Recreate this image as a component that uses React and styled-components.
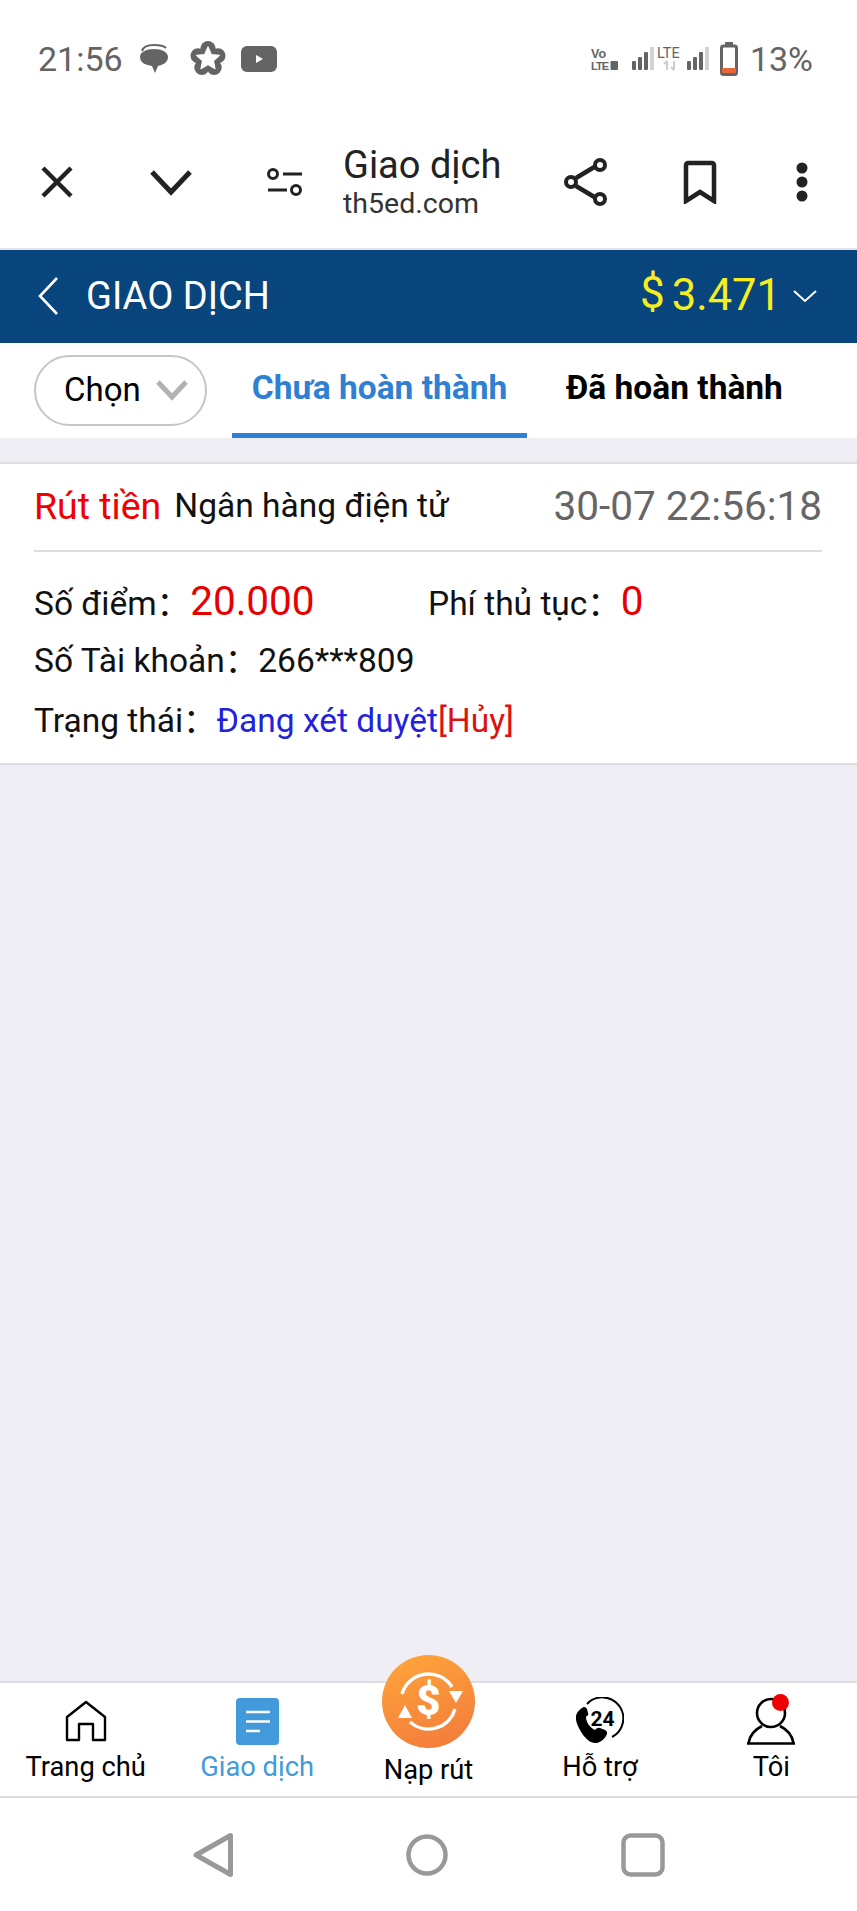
import React from 'react';
import styled, { createGlobalStyle } from 'styled-components';

const GlobalStyle = createGlobalStyle`
  html, body {
    margin: 0;
    padding: 0;
    background: #fff;
    font-family: Roboto, "Noto Sans CJK SC", sans-serif;
  }
  * { box-sizing: border-box; }
`;

const Page = styled.div`
  display: flex;
  flex-direction: column;
  width: 857px;
  height: 1911px;
  background: #eeeef4;
  overflow: hidden;
`;

/* android status bar */
const StatusBar = styled.div`
  display: flex;
  align-items: center;
  justify-content: space-between;
  flex: none;
  height: 118px;
  padding: 0 44px 0 38px;
  background: #fff;
  color: #646464;
`;
const StatusGroup = styled.div`
  display: flex;
  align-items: center;
  gap: ${p => p.$gap || 14}px;
  margin: ${p => p.$margin || 0};
`;
const StatusText = styled.span`
  font-size: 34px;
  line-height: 38px;
  margin: ${p => p.$margin || 0};
`;

/* browser toolbar */
const Toolbar = styled.div`
  display: flex;
  align-items: center;
  flex: none;
  height: 132px;
  padding: 0 10px 2px 0;
  background: #fff;
  border-bottom: 2px solid #e3e6e8;
`;
const ToolSlot = styled.div`
  display: flex;
  align-items: center;
  justify-content: center;
  flex: none;
  width: ${p => p.$w || 114}px;
`;
const TitleBlock = styled.div`
  flex: 1;
  padding-left: 1px;
  color: #222;
`;
const PageTitle = styled.div`
  font-size: 38px;
  line-height: 44px;
`;
const PageHost = styled.div`
  font-size: 28.500px;
  line-height: 34px;
  color: #333;
`;

/* site header */
const Header = styled.div`
  display: flex;
  align-items: center;
  flex: none;
  height: 93px;
  padding: 0 39px 2px 37px;
  background: #08457c;
  color: #fff;
`;
const HeaderTitle = styled.div`
  flex: 1;
  margin-left: 27px;
  font-size: 38px;
`;
const Dollar = styled.span`
  color: #f6ee1f;
  font-size: 44px;
  line-height: 50px;
  margin-top: -6px;
`;
const Balance = styled.span`
  margin: 0 11px 0 7px;
  color: #f6ee1f;
  font-size: 43.500px;
  line-height: 50px;
`;

/* filter + tabs */
const TabBar = styled.div`
  display: flex;
  align-items: stretch;
  flex: none;
  height: 95px;
  background: #fff;
`;
const PillWrap = styled.div`
  display: flex;
  align-items: flex-start;
  flex: none;
  width: 232px;
  padding: 12px 0 0 34px;
`;
const Pill = styled.div`
  display: flex;
  align-items: center;
  justify-content: space-between;
  width: 173px;
  height: 71px;
  padding: 0 16px 2px 28px;
  border: 2px solid #c6c6c6;
  border-radius: 36px;
  font-size: 33px;
  color: #000;
`;
const Tab = styled.div`
  display: flex;
  align-items: center;
  justify-content: center;
  flex: none;
  width: 295px;
  padding-bottom: 1px;
  font-size: 33.500px;
  font-weight: 700;
  color: ${p => (p.$active ? '#2f7fd3' : '#000')};
  border-bottom: 5px solid ${p => (p.$active ? '#2f7fd3' : 'transparent')};
`;

const Content = styled.div`
  flex: 1;
  padding-top: 24px;
`;
const Card = styled.div`
  height: 303px;
  padding: 0 35px 0 34px;
  background: #fff;
  border-top: 2px solid #dedee0;
  border-bottom: 2px solid #dedee0;
`;
const CardHead = styled.div`
  display: flex;
  align-items: center;
  height: 88px;
  padding-bottom: 3px;
  border-bottom: 2px solid #dedede;
`;
const Kind = styled.span`
  color: #f00000;
  font-size: 37.500px;
`;
const Channel = styled.span`
  flex: 1;
  margin-left: 13px;
  font-size: 33.500px;
  color: #111;
`;
const Time = styled.span`
  font-size: 40.500px;
  color: #666;
`;
const CardBody = styled.div`
  padding-top: 19px;
`;
const Line = styled.div`
  display: flex;
  align-items: baseline;
  height: 60px;
  font-size: 33.500px;
  line-height: 60px;
  color: #111;
`;
const Cell = styled.div`
  display: flex;
  align-items: baseline;
  width: ${p => p.$w || 'auto'};
`;
const Amount = styled.span`
  color: #e60000;
  font-size: 40.500px;
`;
const Pending = styled.span`
  color: #2222dd;
`;
const Cancel = styled.span`
  color: #dd1111;
`;

/* bottom tabs */
const BottomNav = styled.div`
  display: grid;
  grid-template-columns: repeat(5, 1fr);
  flex: none;
  height: 117px;
  background: #fff;
  border-top: 2px solid #dedee0;
  border-bottom: 2px solid #dedee0;
`;
const NavItem = styled.div`
  display: flex;
  flex-direction: column;
  align-items: center;
  padding-top: ${p => p.$top ?? 14}px;
  color: ${p => (p.$active ? '#429ada' : '#000')};
  font-size: 27.300px;
`;
const NavIcon = styled.div`
  position: relative;
  display: flex;
  align-items: center;
  justify-content: center;
  height: 48px;
  margin-bottom: 5px;
`;
const NavLabel = styled.span`
  line-height: 34px;
`;
const CashButton = styled.div`
  display: flex;
  align-items: center;
  justify-content: center;
  width: 93px;
  height: 93px;
  margin: -28px 0 5px;
  border-radius: 50%;
  background: linear-gradient(160deg, #ffa63a, #f2793c);
`;
const RedDot = styled.span`
  position: absolute;
  top: -3px;
  right: 6px;
  width: 17px;
  height: 17px;
  border-radius: 50%;
  background: #f00000;
`;

/* android nav */
const SystemNav = styled.div`
  display: grid;
  grid-template-columns: 214px 42px 1fr;
  align-items: center;
  flex: none;
  height: 113px;
  padding-left: 192px;
  background: #fff;
`;
const SysSlot = styled.div`
  display: flex;
  align-items: center;
  padding-left: ${p => p.$pl || 0}px;
`;

const Chat = () => (
  <svg width="30" height="32" viewBox="0 0 30 32">
    <path d="M3 8C4 4 9 2 15 2s10 1 12 3" fill="none" stroke="#646464" strokeWidth="2" />
    <path d="M1 14c0-5 6-8 14-8s14 3 14 8c0 6-6 8-10 9l-3 7-3-7C7 22 1 20 1 14z" fill="#646464" />
  </svg>
);

const Flower = () => (
  <svg width="36" height="36" viewBox="0 0 36 36">
    <g fill="#646464">
      <circle cx="18" cy="18" r="10" />
      <circle cx="18" cy="7.500" r="7.500" />
      <circle cx="28" cy="14.800" r="7.500" />
      <circle cx="24.200" cy="26.500" r="7.500" />
      <circle cx="11.800" cy="26.500" r="7.500" />
      <circle cx="8" cy="14.800" r="7.500" />
    </g>
    <path
      d="M18 6L21.300 13.500 29.400 14.400 23.400 19.800 25 27.700 18 23.600 11 27.700 12.600 19.800 6.600 14.400 14.700 13.500z"
      fill="#fff"
      stroke="#fff"
      strokeWidth="1.200"
      strokeLinejoin="round"
    />
  </svg>
);

const Youtube = () => (
  <svg width="36" height="26" viewBox="0 0 36 26">
    <rect width="36" height="26" rx="6" fill="#646464" />
    <path d="M15 9l7 4-7 4z" fill="#fff" />
  </svg>
);

const VoLte = () => (
  <svg width="27" height="24" viewBox="0 0 27 24">
    <text x="0" y="11" fontFamily="Liberation Sans" fontSize="12.500" fontWeight="700" fill="#646464">Vo</text>
    <text x="0" y="23" fontFamily="Liberation Sans" fontSize="11" fontWeight="700" fill="#646464" textLength="18">LTE</text>
    <rect x="19.500" y="14" width="7.500" height="9" rx="1" fill="#646464" />
  </svg>
);

const Signal = () => (
  <svg width="22" height="24" viewBox="0 0 22 24">
    <rect x="0" y="14" width="4" height="9" rx="1" fill="#646464" />
    <rect x="6" y="10" width="4" height="13" rx="1" fill="#646464" />
    <rect x="12" y="5" width="4" height="18" rx="1" fill="#646464" />
    <rect x="18" y="0" width="4" height="23" fill="#d2d2d2" />
  </svg>
);

const Lte = () => (
  <svg width="31" height="26" viewBox="0 0 31 26">
    <text x="2" y="12" fontFamily="Roboto" fontSize="14.500" fill="#646464">LTE</text>
    <path d="M12 15v9M9 18l3-3M19 15v9M16 21l3 3" stroke="#cccccc" strokeWidth="2" fill="none" />
  </svg>
);

const Battery = () => (
  <svg width="18" height="34" viewBox="0 0 18 34">
    <rect x="5" y="0" width="8" height="4" fill="#646464" />
    <rect x="1.500" y="4" width="15" height="28.500" rx="2" fill="none" stroke="#646464" strokeWidth="3" />
    <rect x="2" y="26" width="14" height="5" fill="#e8663a" />
  </svg>
);

const CloseIcon = () => (
  <svg width="34" height="34" viewBox="0 0 34 34">
    <path d="M3 3l28 28M31 3L3 31" stroke="#222" strokeWidth="4.500" fill="none" />
  </svg>
);

const ChevronIcon = () => (
  <svg width="44" height="28" viewBox="0 0 44 28">
    <path d="M3 4l19 20L41 4" stroke="#222" strokeWidth="5" fill="none" />
  </svg>
);

const TuneIcon = () => (
  <svg width="36" height="30" viewBox="0 0 36 30">
    <circle cx="6" cy="7" r="4.500" fill="none" stroke="#222" strokeWidth="3" />
    <path d="M16 7h19M1 23h19" stroke="#222" strokeWidth="3.200" fill="none" />
    <circle cx="29" cy="23" r="4.500" fill="none" stroke="#222" strokeWidth="3" />
  </svg>
);

const ShareIcon = () => (
  <svg width="44" height="48" viewBox="0 0 44 48">
    <path d="M12 20L32 8M12 28l20 12" stroke="#222" strokeWidth="4.500" fill="none" />
    <circle cx="36" cy="7" r="5" fill="#fff" stroke="#222" strokeWidth="4" />
    <circle cx="7" cy="24" r="5" fill="#fff" stroke="#222" strokeWidth="4" />
    <circle cx="36" cy="41" r="5" fill="#fff" stroke="#222" strokeWidth="4" />
  </svg>
);

const BookmarkIcon = () => (
  <svg width="34" height="44" viewBox="0 0 34 44">
    <path d="M3 41V5a2 2 0 0 1 2-2h24a2 2 0 0 1 2 2v36L17 32z" stroke="#222" strokeWidth="4.500" fill="none" />
  </svg>
);

const DotsIcon = () => (
  <svg width="12" height="40" viewBox="0 0 12 40">
    <circle cx="6" cy="6" r="5.500" fill="#222" />
    <circle cx="6" cy="20" r="5.500" fill="#222" />
    <circle cx="6" cy="34" r="5.500" fill="#222" />
  </svg>
);

const BackIcon = () => (
  <svg width="22" height="38" viewBox="0 0 22 38">
    <path d="M20 1L3 19l17 18" stroke="#fff" strokeWidth="2.600" fill="none" />
  </svg>
);

const SmallChevron = () => (
  <svg width="26" height="14" viewBox="0 0 26 14">
    <path d="M2 2l11 10L24 2" stroke="#fff" strokeWidth="2" fill="none" />
  </svg>
);

const PillChevron = () => (
  <svg width="34" height="22" viewBox="0 0 34 22">
    <path d="M3 3l14 15L31 3" stroke="#b2b2b2" strokeWidth="5" fill="none" />
  </svg>
);

const HomeIcon = () => (
  <svg width="42" height="42" viewBox="0 0 42 42">
    <path
      d="M2 40V17L21 2l19 15v23H28V24H14v16z"
      stroke="#000"
      strokeWidth="2.400"
      strokeLinejoin="round"
      fill="none"
    />
  </svg>
);

const DocIcon = () => (
  <svg width="43" height="47" viewBox="0 0 43 47">
    <rect width="43" height="47" rx="4" fill="#429ada" />
    <path d="M10 14h24M10 23.500h24M10 33h14" stroke="#fff" strokeWidth="2.400" fill="none" />
  </svg>
);

const CashIcon = () => (
  <svg width="73" height="73" viewBox="0 0 73 73">
    <path d="M10 29A27.600 27.600 0 0 1 60 22" stroke="#fff" strokeWidth="3.400" fill="none" />
    <path d="M63 44A27.600 27.600 0 0 1 18 57" stroke="#fff" strokeWidth="3.400" fill="none" />
    <path d="M57 26h14l-7 12zM20 53H6l7-13z" fill="#fff" />
    <text x="36.500" y="50" textAnchor="middle" fontFamily="Roboto" fontSize="42" fontWeight="900" fill="#fff">$</text>
  </svg>
);

const SupportIcon = () => (
  <svg width="49" height="48" viewBox="0 0 49 48">
    <path d="M12 7A21 21 0 1 1 37 40" stroke="#000" strokeWidth="2" fill="none" />
    <path
      d="M7 11c2-2 4-1 5 1l1 4c1 2-1 3-2 4 0 5 4 11 9 13 1-1 3-3 5-2l5 2c2 1 3 3 1 6-3 5-9 9-15 6C8 41 0 26 1 20c0-4 3-7 6-9z"
      fill="#000"
    />
    <text x="27.500" y="29" textAnchor="middle" fontFamily="Roboto" fontSize="21" fontWeight="700" fill="#000">24</text>
  </svg>
);

const UserIcon = () => (
  <svg width="48" height="48" viewBox="0 0 48 48">
    <circle cx="24" cy="16" r="14" fill="none" stroke="#000" strokeWidth="2.600" />
    <path d="M1.500 46C3 37 9 32 15 29M46.500 46C45 37 39 32 33 29M0 46.500h48" fill="none" stroke="#000" strokeWidth="2.600" />
  </svg>
);

const SysBack = () => (
  <svg width="42" height="46" viewBox="0 0 42 46">
    <path d="M4 23L38.500 3.500v39z" stroke="#999" strokeWidth="5" strokeLinejoin="round" fill="none" />
  </svg>
);

const SysHome = () => (
  <svg width="42" height="42" viewBox="0 0 42 42">
    <circle cx="21" cy="21" r="18.500" stroke="#999" strokeWidth="4.500" fill="none" />
  </svg>
);

const SysRecent = () => (
  <svg width="44" height="44" viewBox="0 0 44 44">
    <rect x="2.500" y="2.500" width="39" height="39" rx="7" stroke="#999" strokeWidth="4.500" fill="none" />
  </svg>
);

export default function App() {
  return (
    <>
      <GlobalStyle />
      <Page>
        <StatusBar>
          <StatusGroup>
            <StatusText $margin="0 2px 0 0">21:56</StatusText>
            <Chat />
            <StatusGroup $gap={15} $margin="0 0 0 7px">
              <Flower />
              <Youtube />
            </StatusGroup>
          </StatusGroup>
          <StatusGroup $gap={1}>
            <VoLte />
            <StatusGroup $gap={1} $margin="0 10px 0 13px">
              <Signal />
              <Lte />
              <Signal />
            </StatusGroup>
            <Battery />
            <StatusText $margin="0 0 0 11px">13%</StatusText>
          </StatusGroup>
        </StatusBar>

        <Toolbar>
          <ToolSlot><CloseIcon /></ToolSlot>
          <ToolSlot><ChevronIcon /></ToolSlot>
          <ToolSlot><TuneIcon /></ToolSlot>
          <TitleBlock>
            <PageTitle>Giao dịch</PageTitle>
            <PageHost>th5ed.com</PageHost>
          </TitleBlock>
          <ToolSlot><ShareIcon /></ToolSlot>
          <ToolSlot><BookmarkIcon /></ToolSlot>
          <ToolSlot $w={90}><DotsIcon /></ToolSlot>
        </Toolbar>

        <Header>
          <BackIcon />
          <HeaderTitle>GIAO DỊCH</HeaderTitle>
          <Dollar>$</Dollar>
          <Balance>3.471</Balance>
          <SmallChevron />
        </Header>

        <TabBar>
          <PillWrap>
            <Pill>
              Chọn
              <PillChevron />
            </Pill>
          </PillWrap>
          <Tab $active>Chưa hoàn thành</Tab>
          <Tab>Đã hoàn thành</Tab>
        </TabBar>

        <Content>
          <Card>
            <CardHead>
              <Kind>Rút tiền</Kind>
              <Channel>Ngân hàng điện tử</Channel>
              <Time>30-07 22:56:18</Time>
            </CardHead>
            <CardBody>
              <Line>
                <Cell $w="394px">
                  <span>Số điểm：</span>
                  <Amount>20.000</Amount>
                </Cell>
                <Cell>
                  <span>Phí thủ tục：</span>
                  <Amount>0</Amount>
                </Cell>
              </Line>
              <Line>
                <span>Số Tài khoản：</span>
                <span>266***809</span>
              </Line>
              <Line>
                <span>Trạng thái：</span>
                <Pending>Đang xét duyệt</Pending>
                <Cancel>[Hủy]</Cancel>
              </Line>
            </CardBody>
          </Card>
        </Content>

        <BottomNav>
          <NavItem>
            <NavIcon><HomeIcon /></NavIcon>
            <NavLabel>Trang chủ</NavLabel>
          </NavItem>
          <NavItem $active>
            <NavIcon><DocIcon /></NavIcon>
            <NavLabel>Giao dịch</NavLabel>
          </NavItem>
          <NavItem $top={0}>
            <CashButton><CashIcon /></CashButton>
            <NavLabel>Nạp rút</NavLabel>
          </NavItem>
          <NavItem>
            <NavIcon><SupportIcon /></NavIcon>
            <NavLabel>Hỗ trợ</NavLabel>
          </NavItem>
          <NavItem>
            <NavIcon>
              <UserIcon />
              <RedDot />
            </NavIcon>
            <NavLabel>Tôi</NavLabel>
          </NavItem>
        </BottomNav>

        <SystemNav>
          <SysSlot><SysBack /></SysSlot>
          <SysSlot><SysHome /></SysSlot>
          <SysSlot $pl={173}><SysRecent /></SysSlot>
        </SystemNav>
      </Page>
    </>
  );
}
